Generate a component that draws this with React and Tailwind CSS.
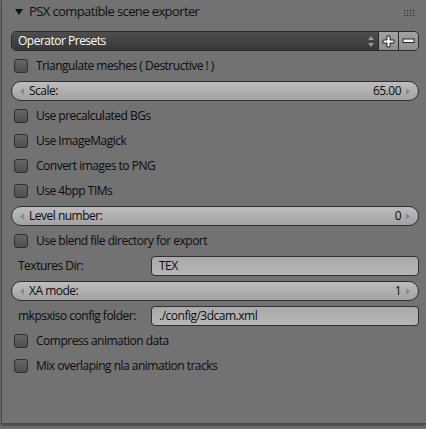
import React from 'react';

const font = { fontFamily: '"Open Sans", "DejaVu Sans", sans-serif' };

const Checkbox = ({ label }) => (
  <div className="h-[20px] flex items-center pl-[3px]">
    <div className="w-[14px] h-[14px] rounded-[3px] border border-[#2e2e2e] bg-gradient-to-b from-[#666] to-[#4e4e4e]" />
    <span className="ml-[8px] text-[12px] tracking-[-0.5px] text-[#0c0c0c] whitespace-nowrap">{label}</span>
  </div>
);

const Arrow = ({ dir }) => (
  <svg width="4" height="7" viewBox="0 0 4 7">
    {dir === 'left' ? (
      <path d="M4 0 L0 3.5 L4 7 Z" fill="#8a8a8a" />
    ) : (
      <path d="M0 0 L4 3.5 L0 7 Z" fill="#8a8a8a" />
    )}
  </svg>
);

const Slider = ({ label, value }) => (
  <div className="h-[20px] rounded-full border border-[#303030] bg-gradient-to-b from-[#bdbdbd] to-[#a2a2a2] flex items-center px-[8px] text-[12px] tracking-[-0.5px] text-[#0c0c0c]">
    <Arrow dir="left" />
    <span className="ml-[5px] flex-1">{label}</span>
    <span className="mr-[5px]">{value}</span>
    <Arrow dir="right" />
  </div>
);

const TextField = ({ label, value }) => (
  <div className="h-[20px] flex items-center">
    <span className="w-[140px] pl-[7px] text-[12px] tracking-[-0.5px] text-[#0c0c0c] whitespace-nowrap">{label}</span>
    <div className="flex-1 h-[20px] rounded-[4px] border border-[#303030] bg-gradient-to-b from-[#a9a9a9] to-[#b6b6b6] flex items-center px-[7px] text-[12px] tracking-[-0.5px] text-[#0c0c0c]">
      {value}
    </div>
  </div>
);

export default function App() {
  return (
    <div className="w-[426px] h-[429px] bg-[#727272] overflow-hidden" style={font}>
      <div className="ml-[1px] h-[424px] border-l border-b border-[#4a4a4a] shadow-[0_2px_2px_rgba(0,0,0,0.35)] flex flex-col">
        {/* header */}
        <div className="h-[31px] relative flex items-start pt-[2px] pl-[13px]">
          <svg width="8" height="8" viewBox="0 0 8 8" className="mt-[6px]">
            <path d="M0 1 L8 1 L4 7 Z" fill="#111" />
          </svg>
          <span className="ml-[6px] text-[13px] tracking-[-0.6px] text-[#111]">PSX compatible scene exporter</span>
          <svg width="12" height="6" viewBox="0 0 12 6" className="absolute right-[10px] top-[10px]">
            {[0, 3, 6, 9].map((x) =>
              [0, 2.5, 5].map((y) => <rect key={x + '-' + y} x={x} y={y} width="1.2" height="1" fill="#2a2a2a" />)
            )}
          </svg>
        </div>

        <div className="flex flex-col gap-[5px] pl-[9px] pr-[7px]">
          {/* presets */}
          <div className="h-[20px] flex rounded-[5px] border border-[#2a2a2a] overflow-hidden">
            <div className="flex-1 bg-gradient-to-b from-[#4e4e4e] to-[#383838] flex items-center pl-[6px] pr-[4px] text-[12px] tracking-[-0.5px] text-white">
              <span className="flex-1">Operator Presets</span>
              <svg width="6" height="13" viewBox="0 0 6 13">
                <path d="M0 5 L3 1 L6 5 Z" fill="#9a9a9a" />
                <path d="M0 8 L3 12 L6 8 Z" fill="#9a9a9a" />
              </svg>
            </div>
            <div className="w-[20px] border-l border-[#2a2a2a] bg-gradient-to-b from-[#a2a2a2] to-[#8e8e8e] flex items-center justify-center">
              <svg width="13" height="13" viewBox="0 0 13 13">
                <path d="M5 1 H8 V5 H12 V8 H8 V12 H5 V8 H1 V5 H5 Z" fill="#fff" stroke="#222" strokeWidth="1" />
              </svg>
            </div>
            <div className="w-[20px] border-l border-[#2a2a2a] bg-gradient-to-b from-[#a2a2a2] to-[#8e8e8e] flex items-center justify-center">
              <svg width="13" height="6" viewBox="0 0 13 6">
                <rect x="1" y="1" width="11" height="3.5" fill="#fff" stroke="#222" strokeWidth="1" />
              </svg>
            </div>
          </div>

          <Checkbox label="Triangulate meshes ( Destructive ! )" />
          <Slider label="Scale:" value="65.00" />
          <Checkbox label="Use precalculated BGs" />
          <Checkbox label="Use ImageMagick" />
          <Checkbox label="Convert images to PNG" />
          <Checkbox label="Use 4bpp TIMs" />
          <Slider label="Level number:" value="0" />
          <Checkbox label="Use blend file directory for export" />
          <TextField label="Textures Dir:" value="TEX" />
          <Slider label="XA mode:" value="1" />
          <TextField label="mkpsxiso config folder:" value="./config/3dcam.xml" />
          <Checkbox label="Compress animation data" />
          <Checkbox label="Mix overlaping nla animation tracks" />
        </div>
      </div>
    </div>
  );
}
